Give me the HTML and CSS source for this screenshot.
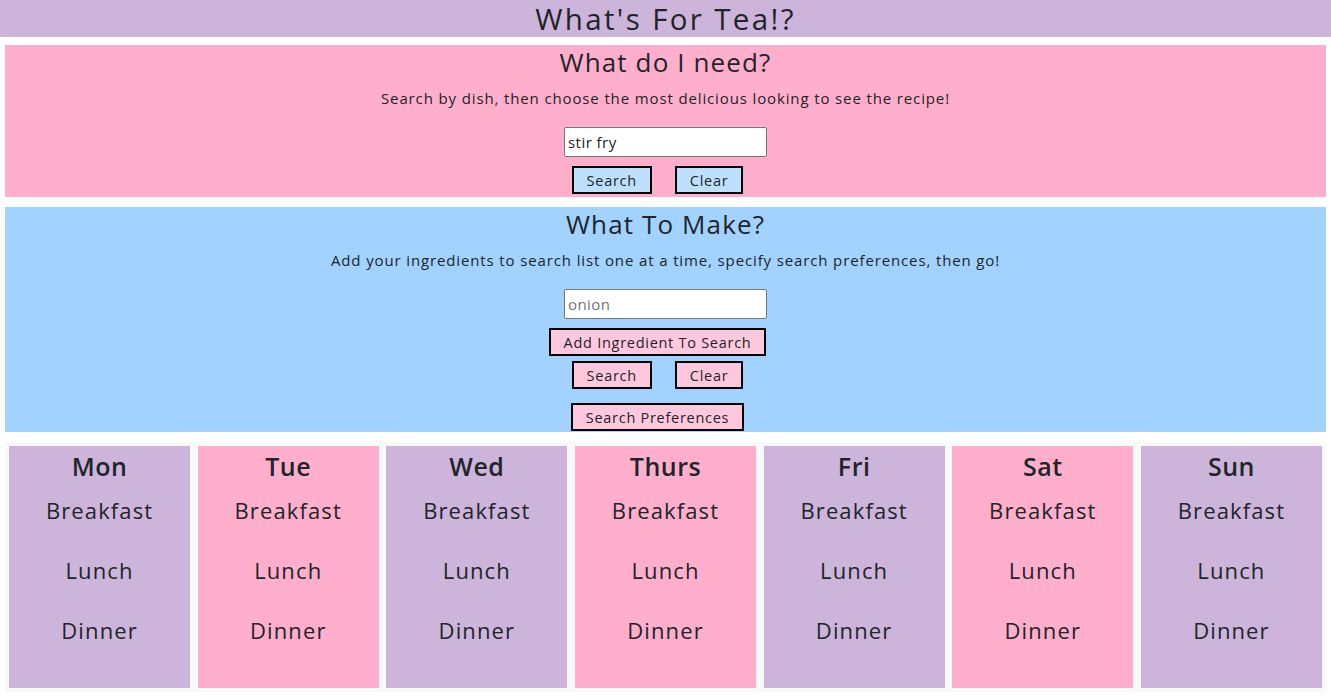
FILE: index.html
```html
<!DOCTYPE html>
<html lang="en">
<head>
<meta charset="utf-8">
<title>What's For Tea!?</title>
<link rel="stylesheet" href="styles.css">
</head>
<body>
<header class="site-header">
  <h1 class="site-title">What's For Tea!?</h1>
</header>

<section class="panel panel-pink">
  <h2 class="panel-title">What do I need?</h2>
  <p class="panel-text">Search by dish, then choose the most delicious looking to see the recipe!</p>
  <input class="text-input" type="text" value="stir fry">
  <div class="btn-row btn-row-first">
    <button class="btn btn-blue">Search</button>
    <button class="btn btn-blue">Clear</button>
  </div>
</section>

<section class="panel panel-blue">
  <h2 class="panel-title">What To Make?</h2>
  <p class="panel-text">Add your ingredients to search list one at a time, specify search preferences, then go!</p>
  <input class="text-input" type="text" placeholder="onion">
  <div class="btn-row btn-row-first">
    <button class="btn btn-pink">Add Ingredient To Search</button>
  </div>
  <div class="btn-row btn-row-tight">
    <button class="btn btn-pink">Search</button>
    <button class="btn btn-pink">Clear</button>
  </div>
  <div class="btn-row btn-row-loose">
    <button class="btn btn-pink">Search Preferences</button>
  </div>
</section>

<section class="week">
  <div class="day day-purple"><h3 class="day-name">Mon</h3><p class="meal">Breakfast</p><p class="meal">Lunch</p><p class="meal">Dinner</p></div>
  <div class="day day-pink"><h3 class="day-name">Tue</h3><p class="meal">Breakfast</p><p class="meal">Lunch</p><p class="meal">Dinner</p></div>
  <div class="day day-purple"><h3 class="day-name">Wed</h3><p class="meal">Breakfast</p><p class="meal">Lunch</p><p class="meal">Dinner</p></div>
  <div class="day day-pink"><h3 class="day-name">Thurs</h3><p class="meal">Breakfast</p><p class="meal">Lunch</p><p class="meal">Dinner</p></div>
  <div class="day day-purple"><h3 class="day-name">Fri</h3><p class="meal">Breakfast</p><p class="meal">Lunch</p><p class="meal">Dinner</p></div>
  <div class="day day-pink"><h3 class="day-name">Sat</h3><p class="meal">Breakfast</p><p class="meal">Lunch</p><p class="meal">Dinner</p></div>
  <div class="day day-purple"><h3 class="day-name">Sun</h3><p class="meal">Breakfast</p><p class="meal">Lunch</p><p class="meal">Dinner</p></div>
</section>
</body>
</html>
```

FILE: styles.css
```css
* { box-sizing: border-box; }

body {
  margin: 0;
  font-family: "Open Sans", "Noto Sans", sans-serif;
  color: #212529;
  background: #ffffff;
  letter-spacing: 0.07em;
}

.site-header {
  background: #cdb4db;
  height: 37px;
  margin-bottom: 8px;
  display: flex;
  align-items: center;
  justify-content: center;
}

.site-title {
  margin: 0;
  font-size: 29.5px;
  font-weight: 400;
  line-height: 37px;
  letter-spacing: 0.08em;
}

.panel {
  margin: 0 5px;
  display: flex;
  flex-direction: column;
  align-items: center;
}

.panel-pink {
  background: #ffafcc;
  height: 152px;
  margin-bottom: 10px;
}

.panel-blue {
  background: #a2d2ff;
  height: 225px;
  margin-bottom: 10px;
}

.panel-title {
  margin: 0;
  font-size: 26px;
  font-weight: 400;
  line-height: 34px;
}

.panel-text {
  margin: 9px 0 0;
  font-size: 15px;
  line-height: 20px;
  letter-spacing: 0.058em;
}

.text-input {
  margin-top: 19px;
  width: 203px;
  height: 30px;
  border: 1px solid #767676;
  border-radius: 2px;
  padding: 1px 3px;
  font-family: "Open Sans", "Noto Sans", sans-serif;
  font-size: 15px;
  letter-spacing: 0.03em;
  color: #212529;
  background: #ffffff;
}

.text-input::placeholder { color: #757575; }

.btn-row {
  display: flex;
  justify-content: center;
  gap: 23px;
  padding-right: 16px;
}

.btn-row-first { margin-top: 9px; }
.btn-row-tight { margin-top: 5px; }
.btn-row-loose { margin-top: 14px; }

.btn {
  height: 28px;
  border: 2px solid #000000;
  padding: 0 13px;
  font-family: "Open Sans", "Noto Sans", sans-serif;
  font-size: 14.5px;
  letter-spacing: 0.05em;
  color: #212529;
  border-radius: 0;
  cursor: pointer;
}

.btn-blue { background: #bde0fe; }
.btn-pink { background: #ffc8dd; }

.week {
  margin: 0 5px;
  height: 250px;
  padding: 4px;
  background: #f8f9fa;
  display: grid;
  grid-template-columns: repeat(7, 1fr);
  gap: 7.5px;
}

.day {
  text-align: center;
  padding-top: 4px;
}

.day-purple { background: #cdb4db; }
.day-pink { background: #ffafcc; }

.day-name {
  margin: 0;
  font-size: 25px;
  font-weight: 600;
  line-height: 32px;
  letter-spacing: 0.02em;
}

.meal {
  margin: 0;
  font-size: 22px;
  line-height: 30px;
}

.meal + .meal { margin-top: 30px; }
.day-name + .meal { margin-top: 13px; }
```
